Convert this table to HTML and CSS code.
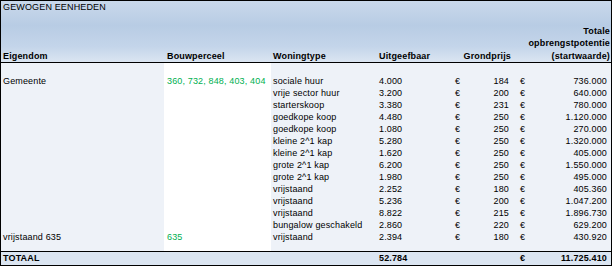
FILE: index.html
```html
<!DOCTYPE html>
<html lang="nl">
<head>
<meta charset="utf-8">
<title>Gewogen eenheden</title>
<link rel="stylesheet" href="styles.css">
</head>
<body>
<div class="sheet">
  <div class="head">
    <div class="title">GEWOGEN EENHEDEN</div>
    <div class="row hrow">
      <div class="c1">Eigendom</div>
      <div class="c2">Bouwperceel</div>
      <div class="c3">Woningtype</div>
      <div class="c4">Uitgeefbaar</div>
      <div class="c56">Grondprijs</div>
      <div class="c78">Totale<br>opbrengstpotentie<br>(startwaarde)</div>
    </div>
  </div>
  <div class="body">
    <div class="row"><div class="c1">Gemeente</div><div class="c2 green">360, 732, 848, 403, 404</div><div class="c3">sociale huur</div><div class="c4">4.000</div><div class="c5">€</div><div class="c6">184</div><div class="c7">€</div><div class="c8">736.000</div></div>
    <div class="row"><div class="c1"></div><div class="c2"></div><div class="c3">vrije sector huur</div><div class="c4">3.200</div><div class="c5">€</div><div class="c6">200</div><div class="c7">€</div><div class="c8">640.000</div></div>
    <div class="row"><div class="c1"></div><div class="c2"></div><div class="c3">starterskoop</div><div class="c4">3.380</div><div class="c5">€</div><div class="c6">231</div><div class="c7">€</div><div class="c8">780.000</div></div>
    <div class="row"><div class="c1"></div><div class="c2"></div><div class="c3">goedkope koop</div><div class="c4">4.480</div><div class="c5">€</div><div class="c6">250</div><div class="c7">€</div><div class="c8">1.120.000</div></div>
    <div class="row"><div class="c1"></div><div class="c2"></div><div class="c3">goedkope koop</div><div class="c4">1.080</div><div class="c5">€</div><div class="c6">250</div><div class="c7">€</div><div class="c8">270.000</div></div>
    <div class="row"><div class="c1"></div><div class="c2"></div><div class="c3">kleine 2^1 kap</div><div class="c4">5.280</div><div class="c5">€</div><div class="c6">250</div><div class="c7">€</div><div class="c8">1.320.000</div></div>
    <div class="row"><div class="c1"></div><div class="c2"></div><div class="c3">kleine 2^1 kap</div><div class="c4">1.620</div><div class="c5">€</div><div class="c6">250</div><div class="c7">€</div><div class="c8">405.000</div></div>
    <div class="row"><div class="c1"></div><div class="c2"></div><div class="c3">grote 2^1 kap</div><div class="c4">6.200</div><div class="c5">€</div><div class="c6">250</div><div class="c7">€</div><div class="c8">1.550.000</div></div>
    <div class="row"><div class="c1"></div><div class="c2"></div><div class="c3">grote 2^1 kap</div><div class="c4">1.980</div><div class="c5">€</div><div class="c6">250</div><div class="c7">€</div><div class="c8">495.000</div></div>
    <div class="row"><div class="c1"></div><div class="c2"></div><div class="c3">vrijstaand</div><div class="c4">2.252</div><div class="c5">€</div><div class="c6">180</div><div class="c7">€</div><div class="c8">405.360</div></div>
    <div class="row"><div class="c1"></div><div class="c2"></div><div class="c3">vrijstaand</div><div class="c4">5.236</div><div class="c5">€</div><div class="c6">200</div><div class="c7">€</div><div class="c8">1.047.200</div></div>
    <div class="row"><div class="c1"></div><div class="c2"></div><div class="c3">vrijstaand</div><div class="c4">8.822</div><div class="c5">€</div><div class="c6">215</div><div class="c7">€</div><div class="c8">1.896.730</div></div>
    <div class="row"><div class="c1"></div><div class="c2"></div><div class="c3">bungalow geschakeld</div><div class="c4">2.860</div><div class="c5">€</div><div class="c6">220</div><div class="c7">€</div><div class="c8">629.200</div></div>
    <div class="row"><div class="c1">vrijstaand 635</div><div class="c2 green">635</div><div class="c3">vrijstaand</div><div class="c4">2.394</div><div class="c5">€</div><div class="c6">180</div><div class="c7">€</div><div class="c8">430.920</div></div>
  </div>
  <div class="total">
    <div class="row trow"><div class="c1">TOTAAL</div><div class="c2"></div><div class="c3"></div><div class="c4">52.784</div><div class="c5"></div><div class="c6"></div><div class="c7">€</div><div class="c8">11.725.410</div></div>
  </div>
</div>
</body>
</html>
```
FILE: styles.css
```css
html, body {
  margin: 0;
  padding: 0;
  background: #ffffff;
}
body {
  font-family: "Liberation Sans", Arial, sans-serif;
  font-size: 9px;
  letter-spacing: 0.15px;
  color: #000;
}
.sheet {
  width: 612px;
  box-sizing: border-box;
  border: 1px solid #000;
}
.head {
  height: 62px;
  box-sizing: border-box;
  border-bottom: 1px solid #000;
  background: linear-gradient(to bottom, #c9d8eb 0%, #b8cce4 40%, #c4d5ea 75%, #dbe5f1 100%);
  display: flex;
  flex-direction: column;
  justify-content: space-between;
}
.title {
  line-height: 12px;
  padding-left: 2px;
}
.row {
  display: grid;
  grid-template-columns: 163px 107px 106px 76px 22px 37px 18px 81px;
  height: 12px;
  line-height: 12px;
  white-space: nowrap;
}
.hrow {
  height: auto;
  align-items: end;
  font-weight: bold;
  line-height: 12.5px;
}
.body {
  padding: 12px 0 8px;
  background: linear-gradient(to right, #eef2f8 163px, #ffffff 163px, #ffffff 270px, #eef2f8 270px);
}
.total {
  border-top: 1px solid #000;
  background: #dbe5f1;
}
.trow {
  height: 13px;
  line-height: 13px;
  font-weight: bold;
}
.c1 { padding-left: 2px; }
.c2 { padding-left: 3px; }
.c3 { padding-left: 2px; }
.c4 { padding-left: 2px; }
.c5 { padding-left: 2px; }
.c6 { text-align: right; padding-right: 3px; }
.c7 { padding-left: 8px; }
.c8 { text-align: right; padding-right: 4px; }
.c56 { grid-column: span 2; text-align: right; padding-right: 1px; }
.c78 { grid-column: span 2; text-align: right; padding-right: 1px; }
.green { color: #00b050; }
```
